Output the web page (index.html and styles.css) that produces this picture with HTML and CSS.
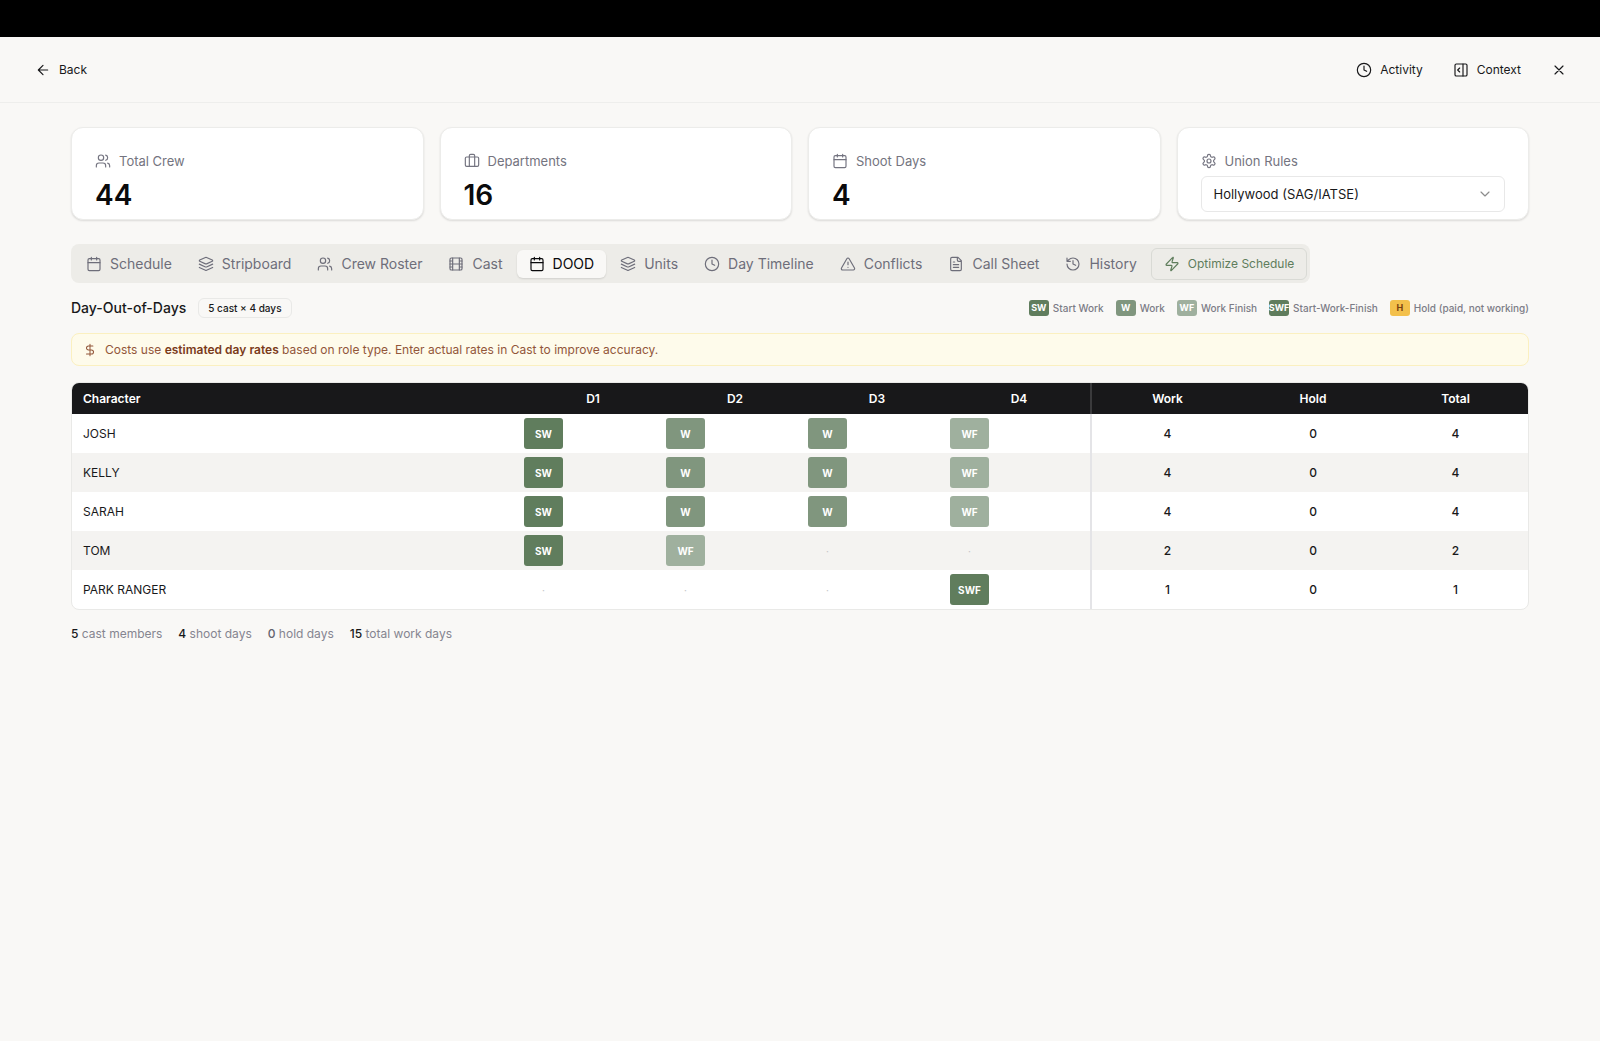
FILE: index.html
```html
<!DOCTYPE html>
<html lang="en">
<head>
<meta charset="utf-8">
<meta name="viewport" content="width=device-width, initial-scale=1">
<title>Day-Out-of-Days</title>
<link rel="stylesheet" href="styles.css">
</head>
<body>

<!-- shared icons -->
<svg class="sprite" aria-hidden="true">
  <symbol id="i-back" viewBox="0 0 24 24"><path d="m12 19-7-7 7-7M19 12H5"/></symbol>
  <symbol id="i-clock" viewBox="0 0 24 24"><circle cx="12" cy="12" r="10"/><path d="M12 6v6l4 2"/></symbol>
  <symbol id="i-panel" viewBox="0 0 24 24"><rect x="3" y="3" width="18" height="18" rx="2"/><path d="M15 3v18M10 15l-3-3 3-3"/></symbol>
  <symbol id="i-close" viewBox="0 0 24 24"><path d="M18 6 6 18M6 6l12 12"/></symbol>
  <symbol id="i-users" viewBox="0 0 24 24"><path d="M16 21v-2a4 4 0 0 0-4-4H6a4 4 0 0 0-4 4v2"/><circle cx="9" cy="7" r="4"/><path d="M22 21v-2a4 4 0 0 0-3-3.87M16 3.13a4 4 0 0 1 0 7.75"/></symbol>
  <symbol id="i-case" viewBox="0 0 24 24"><rect x="2" y="6" width="20" height="14" rx="2"/><path d="M16 20V4a2 2 0 0 0-2-2h-4a2 2 0 0 0-2 2v16"/></symbol>
  <symbol id="i-calendar" viewBox="0 0 24 24"><rect x="3" y="4" width="18" height="18" rx="2"/><path d="M8 2v4M16 2v4M3 10h18"/></symbol>
  <symbol id="i-gear" viewBox="0 0 24 24"><path d="M12.22 2h-.44a2 2 0 0 0-2 2v.18a2 2 0 0 1-1 1.73l-.43.25a2 2 0 0 1-2 0l-.15-.08a2 2 0 0 0-2.73.73l-.22.38a2 2 0 0 0 .73 2.73l.15.1a2 2 0 0 1 1 1.72v.51a2 2 0 0 1-1 1.74l-.15.09a2 2 0 0 0-.73 2.73l.22.38a2 2 0 0 0 2.73.73l.15-.08a2 2 0 0 1 2 0l.43.25a2 2 0 0 1 1 1.73V20a2 2 0 0 0 2 2h.44a2 2 0 0 0 2-2v-.18a2 2 0 0 1 1-1.73l.43-.25a2 2 0 0 1 2 0l.15.08a2 2 0 0 0 2.73-.73l.22-.39a2 2 0 0 0-.73-2.73l-.15-.08a2 2 0 0 1-1-1.74v-.5a2 2 0 0 1 1-1.74l.15-.09a2 2 0 0 0 .73-2.73l-.22-.38a2 2 0 0 0-2.73-.73l-.15.08a2 2 0 0 1-2 0l-.43-.25a2 2 0 0 1-1-1.73V4a2 2 0 0 0-2-2z"/><circle cx="12" cy="12" r="3"/></symbol>
  <symbol id="i-down" viewBox="0 0 24 24"><path d="m6 9 6 6 6-6"/></symbol>
  <symbol id="i-layers" viewBox="0 0 24 24"><path d="m12.83 2.18a2 2 0 0 0-1.66 0L2.6 6.08a1 1 0 0 0 0 1.83l8.58 3.91a2 2 0 0 0 1.66 0l8.58-3.9a1 1 0 0 0 0-1.83ZM22 12.2l-9.17 4.16a2 2 0 0 1-1.66 0L2 12.2M22 17.2l-9.17 4.16a2 2 0 0 1-1.66 0L2 17.2"/></symbol>
  <symbol id="i-film" viewBox="0 0 24 24"><rect x="3" y="3" width="18" height="18" rx="2"/><path d="M7 3v18M3 7.5h4M3 12h18M3 16.5h4M17 3v18M17 7.5h4M17 16.5h4"/></symbol>
  <symbol id="i-alert" viewBox="0 0 24 24"><path d="m21.73 18-8-14a2 2 0 0 0-3.48 0l-8 14A2 2 0 0 0 4 21h16a2 2 0 0 0 1.73-3M12 9v4M12 17h.01"/></symbol>
  <symbol id="i-file" viewBox="0 0 24 24"><path d="M15 2H6a2 2 0 0 0-2 2v16a2 2 0 0 0 2 2h12a2 2 0 0 0 2-2V7ZM14 2v4a2 2 0 0 0 2 2h4M10 9H8M16 13H8M16 17H8"/></symbol>
  <symbol id="i-history" viewBox="0 0 24 24"><path d="M3 12a9 9 0 1 0 9-9 9.75 9.75 0 0 0-6.74 2.74L3 8M3 3v5h5M12 7v5l4 2"/></symbol>
  <symbol id="i-zap" viewBox="0 0 24 24"><path d="M4 14a1 1 0 0 1-.78-1.63l9.9-10.2a.5.5 0 0 1 .86.46l-1.92 6.02A1 1 0 0 0 13 10h7a1 1 0 0 1 .78 1.63l-9.9 10.2a.5.5 0 0 1-.86-.46l1.92-6.02A1 1 0 0 0 11 14z"/></symbol>
  <symbol id="i-dollar" viewBox="0 0 24 24"><path d="M12 2v20M17 5H9.500a3.500 3.500 0 0 0 0 7h5a3.500 3.500 0 0 1 0 7H6"/></symbol>
</svg>

<div class="topbar"></div>

<header class="header">
  <button type="button" class="link-btn"><svg class="icon"><use href="#i-back"/></svg>Back</button>
  <div class="header-actions">
    <button type="button" class="link-btn"><svg class="icon"><use href="#i-clock"/></svg>Activity</button>
    <button type="button" class="link-btn"><svg class="icon"><use href="#i-panel"/></svg>Context</button>
    <button type="button" class="link-btn" aria-label="Close"><svg class="icon"><use href="#i-close"/></svg></button>
  </div>
</header>

<main class="container">
  <section class="cards">
    <div class="card">
      <div class="card-label"><svg class="icon"><use href="#i-users"/></svg>Total Crew</div>
      <div class="card-value">44</div>
    </div>
    <div class="card">
      <div class="card-label"><svg class="icon"><use href="#i-case"/></svg>Departments</div>
      <div class="card-value">16</div>
    </div>
    <div class="card">
      <div class="card-label"><svg class="icon"><use href="#i-calendar"/></svg>Shoot Days</div>
      <div class="card-value">4</div>
    </div>
    <div class="card">
      <label class="card-label" for="union"><svg class="icon"><use href="#i-gear"/></svg>Union Rules</label>
      <div class="select-wrap">
        <select id="union" name="union">
          <option>Hollywood (SAG/IATSE)</option>
        </select>
        <svg class="icon"><use href="#i-down"/></svg>
      </div>
    </div>
  </section>

  <nav class="tabs">
    <button type="button" class="tab"><svg class="icon"><use href="#i-calendar"/></svg>Schedule</button>
    <button type="button" class="tab"><svg class="icon"><use href="#i-layers"/></svg>Stripboard</button>
    <button type="button" class="tab"><svg class="icon"><use href="#i-users"/></svg>Crew Roster</button>
    <button type="button" class="tab"><svg class="icon"><use href="#i-film"/></svg>Cast</button>
    <button type="button" class="tab active"><svg class="icon"><use href="#i-calendar"/></svg>DOOD</button>
    <button type="button" class="tab"><svg class="icon"><use href="#i-layers"/></svg>Units</button>
    <button type="button" class="tab"><svg class="icon"><use href="#i-clock"/></svg>Day Timeline</button>
    <button type="button" class="tab"><svg class="icon"><use href="#i-alert"/></svg>Conflicts</button>
    <button type="button" class="tab"><svg class="icon"><use href="#i-file"/></svg>Call Sheet</button>
    <button type="button" class="tab"><svg class="icon"><use href="#i-history"/></svg>History</button>
    <button type="button" class="optimize"><svg class="icon"><use href="#i-zap"/></svg>Optimize Schedule</button>
  </nav>

  <div class="title-row">
    <h1>Day-Out-of-Days</h1>
    <span class="badge">5 cast × 4 days</span>
    <div class="legend">
      <span class="legend-item"><i class="key sw">SW</i>Start Work</span>
      <span class="legend-item"><i class="key w">W</i>Work</span>
      <span class="legend-item"><i class="key wf">WF</i>Work Finish</span>
      <span class="legend-item"><i class="key sw">SWF</i>Start-Work-Finish</span>
      <span class="legend-item"><i class="key hold">H</i>Hold (paid, not working)</span>
    </div>
  </div>

  <div class="notice">
    <svg class="icon"><use href="#i-dollar"/></svg>
    <p>Costs use <b>estimated day rates</b> based on role type. Enter actual rates in Cast to improve accuracy.</p>
  </div>

  <div class="table-box">
    <table>
      <colgroup>
        <col>
        <col class="col-day" span="4">
        <col class="col-work">
        <col class="col-hold">
        <col class="col-total">
      </colgroup>
      <thead>
        <tr><th class="name">Character</th><th>D1</th><th>D2</th><th>D3</th><th>D4</th><th class="split">Work</th><th>Hold</th><th>Total</th></tr>
      </thead>
      <tbody>
        <tr>
          <td class="name">JOSH</td>
          <td class="day"><span class="cell sw">SW</span></td>
          <td class="day"><span class="cell w">W</span></td>
          <td class="day"><span class="cell w">W</span></td>
          <td class="day"><span class="cell wf">WF</span></td>
          <td class="split">4</td><td>0</td><td>4</td>
        </tr>
        <tr>
          <td class="name">KELLY</td>
          <td class="day"><span class="cell sw">SW</span></td>
          <td class="day"><span class="cell w">W</span></td>
          <td class="day"><span class="cell w">W</span></td>
          <td class="day"><span class="cell wf">WF</span></td>
          <td class="split">4</td><td>0</td><td>4</td>
        </tr>
        <tr>
          <td class="name">SARAH</td>
          <td class="day"><span class="cell sw">SW</span></td>
          <td class="day"><span class="cell w">W</span></td>
          <td class="day"><span class="cell w">W</span></td>
          <td class="day"><span class="cell wf">WF</span></td>
          <td class="split">4</td><td>0</td><td>4</td>
        </tr>
        <tr>
          <td class="name">TOM</td>
          <td class="day"><span class="cell sw">SW</span></td>
          <td class="day"><span class="cell wf">WF</span></td>
          <td class="day"><span class="cell off">·</span></td>
          <td class="day"><span class="cell off">·</span></td>
          <td class="split">2</td><td>0</td><td>2</td>
        </tr>
        <tr>
          <td class="name">PARK RANGER</td>
          <td class="day"><span class="cell off">·</span></td>
          <td class="day"><span class="cell off">·</span></td>
          <td class="day"><span class="cell off">·</span></td>
          <td class="day"><span class="cell sw">SWF</span></td>
          <td class="split">1</td><td>0</td><td>1</td>
        </tr>
      </tbody>
    </table>
  </div>

  <div class="summary">
    <span><b>5</b> cast members</span>
    <span><b>4</b> shoot days</span>
    <span><b class="muted">0</b> hold days</span>
    <span><b>15</b> total work days</span>
  </div>
</main>

</body>
</html>
```
FILE: styles.css
```css
* {
  box-sizing: border-box;
}

body {
  margin: 0;
  background: #f9f8f6;
  color: #18181a;
  font-family: Inter, "Liberation Sans", sans-serif;
  font-size: 12px;
  line-height: 16px;
}

button,
select {
  font: inherit;
  color: inherit;
  background: none;
  border: none;
  padding: 0;
  cursor: pointer;
}

.sprite {
  display: none;
}

.icon {
  width: 16px;
  height: 16px;
  flex: none;
  fill: none;
  stroke: currentColor;
  stroke-width: 1.75;
  stroke-linecap: round;
  stroke-linejoin: round;
}

.topbar {
  height: 37px;
  background: #000;
}

.header {
  display: flex;
  align-items: center;
  justify-content: space-between;
  height: 66px;
  padding: 0 33px 0 35px;
  border-bottom: 1px solid #eeeeec;
}

.header-actions {
  display: flex;
  gap: 30px;
}

.link-btn {
  display: flex;
  align-items: center;
  gap: 8px;
}

.container {
  padding: 24px 71px;
}

/* stat cards */
.cards {
  display: grid;
  grid-template-columns: repeat(4, 1fr);
  gap: 16px;
}

.card {
  height: 93px;
  padding: 23px 23px 7px;
  background: #fff;
  border: 1px solid #ececea;
  border-radius: 12px;
  box-shadow: 0 1px 2px rgba(0, 0, 0, 0.12);
}

.card-label {
  display: flex;
  align-items: center;
  gap: 8px;
  font-size: 13px;
  line-height: 20px;
  color: #747480;
}

.card-value {
  margin-top: 6px;
  font-size: 28px;
  line-height: 36px;
  font-weight: 600;
  color: #0a0a0c;
}

.select-wrap {
  display: flex;
  align-items: center;
  position: relative;
  margin-top: 5px;
}

.select-wrap select {
  width: 100%;
  height: 36px;
  padding: 0 12px;
  appearance: none;
  border: 1px solid #e8e8e8;
  border-radius: 6px;
  font-size: 13px;
}

.select-wrap .icon {
  position: absolute;
  right: 12px;
  color: #8c8c8c;
  pointer-events: none;
}

/* tabs */
.tabs {
  display: flex;
  align-items: center;
  gap: 2px;
  width: fit-content;
  height: 39px;
  margin-top: 24px;
  padding: 0 3px;
  background: #edece8;
  border-radius: 8px;
}

.tab {
  display: flex;
  align-items: center;
  gap: 8px;
  height: 28px;
  padding: 0 12px;
  border-radius: 6px;
  font-size: 14px;
  color: #6e6e7a;
}

.tab.active {
  background: #f9f8f6;
  color: #0a0a0c;
  box-shadow: 0 1px 2px rgba(0, 0, 0, 0.12);
}

.optimize {
  display: flex;
  align-items: center;
  gap: 8px;
  height: 32px;
  padding: 0 12px;
  border: 1px solid #d9dad5;
  border-radius: 6px;
  color: #5f7d5c;
}

/* title and legend */
.title-row {
  display: flex;
  align-items: center;
  gap: 12px;
  height: 20px;
  margin-top: 15px;
}

h1 {
  margin: 0;
  font-size: 14px;
  line-height: 20px;
  font-weight: 500;
}

.badge {
  padding: 1px 9px;
  border: 1px solid #e9e9e7;
  border-radius: 6px;
  font-size: 10px;
  font-weight: 500;
}

.legend {
  display: flex;
  gap: 12px;
  margin-left: auto;
  font-size: 10px;
  font-weight: 500;
  color: #7c7c86;
}

.legend-item {
  display: flex;
  align-items: center;
  gap: 4px;
}

.key {
  display: flex;
  align-items: center;
  justify-content: center;
  width: 20px;
  height: 16px;
  border-radius: 3px;
  overflow: hidden;
  font-size: 9px;
  font-style: normal;
  font-weight: 700;
}

.sw {
  background: #607d5d;
  color: #fff;
}

.w {
  background: #80967e;
  color: #fff;
}

.wf {
  background: #9fb09e;
  color: #fff;
}

.hold {
  background: #f3c04b;
  color: #7a3f10;
}

/* rate notice */
.notice {
  display: flex;
  align-items: center;
  gap: 8px;
  height: 33px;
  margin-top: 15px;
  padding: 0 11px;
  background: #fefbeb;
  border: 1px solid #fbf0c0;
  border-radius: 8px;
  color: #92563a;
}

.notice .icon {
  width: 14px;
  height: 14px;
}

.notice p {
  margin: 0;
}

.notice b {
  font-weight: 600;
  color: #7a3a1a;
}

/* day-out-of-days table */
.table-box {
  margin-top: 16px;
  background: #fff;
  border: 1px solid #e9e9e7;
  border-radius: 8px;
  overflow: hidden;
}

table {
  width: 100%;
  table-layout: fixed;
  border-collapse: separate;
  border-spacing: 0;
}

.col-day {
  width: 142px;
}

.col-work {
  width: 153px;
}

.col-hold {
  width: 140px;
}

.col-total {
  width: 145px;
}

th {
  height: 31px;
  padding: 0;
  background: #18181a;
  color: #fff;
  font-weight: 600;
}

td {
  height: 39px;
  padding: 0;
  text-align: center;
  font-weight: 500;
}

th.name,
td.name {
  padding-left: 11px;
  text-align: left;
}

td.name {
  font-weight: 400;
}

td.day {
  padding-left: 2px;
}

tbody tr:nth-child(even) {
  background: #f4f3f1;
}

td.split {
  border-left: 2px solid #e4e4e7;
}

th.split {
  border-left: 2px solid #3a3a3c;
}

.cell {
  display: flex;
  align-items: center;
  justify-content: center;
  width: 39px;
  height: 31px;
  border-radius: 3px;
  font-size: 10px;
  font-weight: 700;
}

.off {
  color: #c4c4c8;
  font-weight: 400;
}

.summary {
  display: flex;
  gap: 16px;
  margin-top: 16px;
  color: #858590;
}

.summary b {
  font-weight: 500;
  color: #18181a;
}

.summary b.muted {
  color: #62626e;
}
```
